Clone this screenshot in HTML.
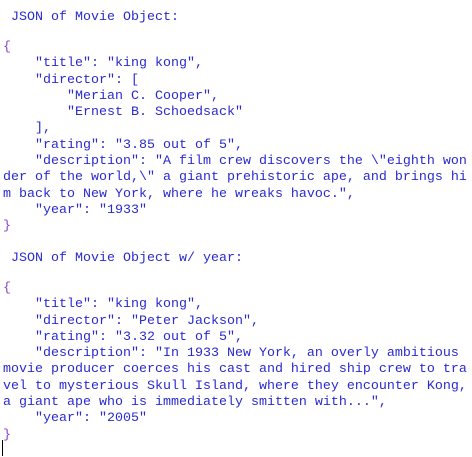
<!DOCTYPE html>
<html><head><style>
html,body{margin:0;padding:0;background:#fff;width:472px;height:457px;overflow:hidden}
pre{position:absolute;left:3px;margin:0;font-family:"Liberation Mono","Courier New",monospace;font-size:13.33px;line-height:16.3px;color:#2a2ad0}
.b{color:#8a3fd0}
.cur{position:absolute;left:2px;top:440px;width:1px;height:16px;background:#000}
</style></head><body>
<pre style="top:10px"> JSON of Movie Object:</pre>
<pre style="top:40px"><span class="b">{</span>
    "title": "king kong",
    "director": [
        "Merian C. Cooper",
        "Ernest B. Schoedsack"
    ],
    "rating": "3.85 out of 5",
    "description": "A film crew discovers the \"eighth won
der of the world,\" a giant prehistoric ape, and brings hi
m back to New York, where he wreaks havoc.",
    "year": "1933"
<span class="b">}</span></pre>
<pre style="top:251px"> JSON of Movie Object w/ year:</pre>
<pre style="top:281px"><span class="b">{</span>
    "title": "king kong",
    "director": "Peter Jackson",
    "rating": "3.32 out of 5",
    "description": "In 1933 New York, an overly ambitious
movie producer coerces his cast and hired ship crew to tra
vel to mysterious Skull Island, where they encounter Kong,
a giant ape who is immediately smitten with...",
    "year": "2005"
<span class="b">}</span></pre>
<div class="cur"></div>
</body></html>
